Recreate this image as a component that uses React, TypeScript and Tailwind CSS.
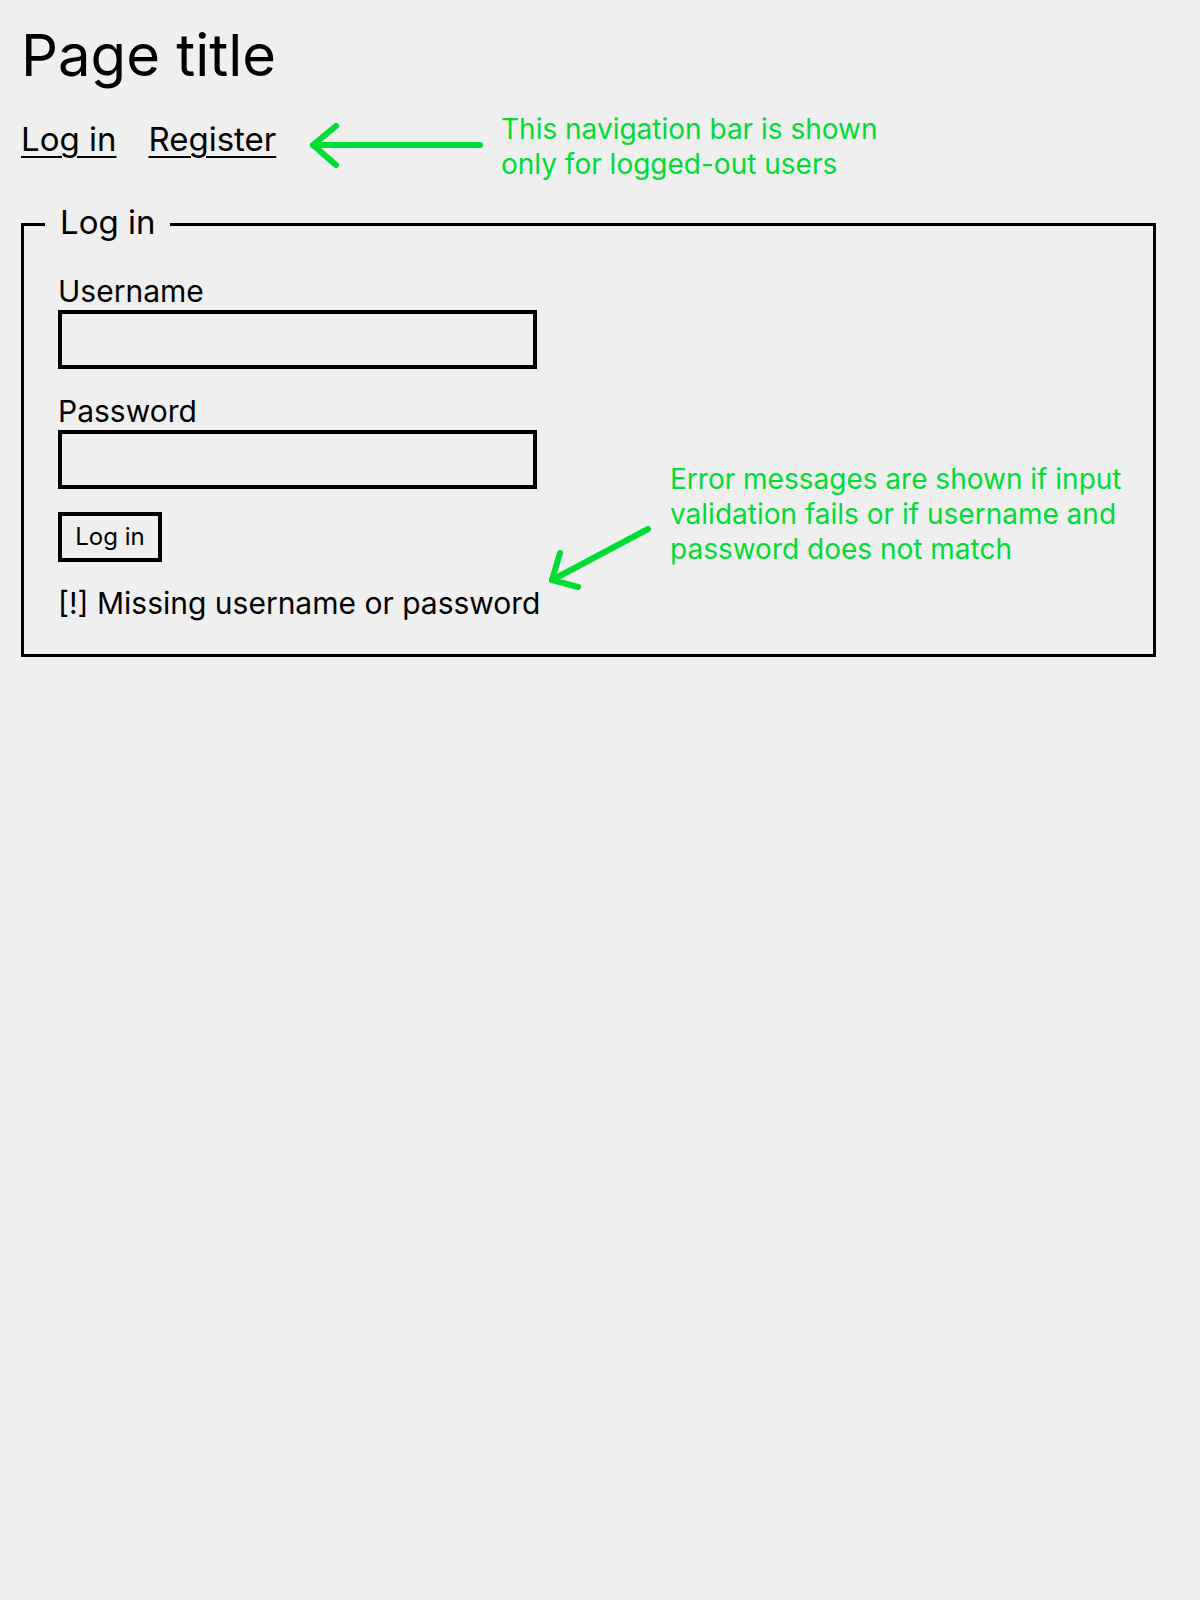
import React from "react";

const GREEN = "#00dc34";

function ArrowLeft() {
  return (
    <svg width="180" height="50" viewBox="0 0 180 50" className="shrink-0 mt-[8px]">
      <g stroke={GREEN} strokeWidth="6" strokeLinecap="round" strokeLinejoin="round" fill="none">
        <line x1="7" y1="25" x2="174" y2="25" />
        <polyline points="30,6 7,25 30,45" />
      </g>
    </svg>
  );
}

function ArrowDownLeft() {
  return (
    <svg width="112" height="74" viewBox="0 0 112 74" className="shrink-0 ml-[9px] mt-[247px]">
      <g stroke={GREEN} strokeWidth="6" strokeLinecap="round" strokeLinejoin="round" fill="none">
        <line x1="102" y1="9" x2="6" y2="60" />
        <polyline points="14,33 6,60 32,67" />
      </g>
    </svg>
  );
}

export default function App() {
  return (
    <div
      className="min-h-[1600px] w-full bg-[#efefef] pl-[21px] pt-[20px] text-black"
      style={{ fontFamily: "Inter, 'Noto Sans', sans-serif" }}
    >
      <h1 className="text-[58px] leading-[70px] font-normal">Page title</h1>

      <div className="mt-[22px] flex items-start">
        <nav className="mt-[7px] flex w-[285px] shrink-0 gap-[32px] text-[33px] leading-[40px]">
          <a href="#" className="underline decoration-[2px] underline-offset-[5px]">
            Log in
          </a>
          <a href="#" className="underline decoration-[2px] underline-offset-[5px]">
            Register
          </a>
        </nav>
        <ArrowLeft />
        <div className="ml-[15px] text-[28px] leading-[35px] text-[#00dc34]">
          <div className="whitespace-nowrap">This navigation bar is shown</div>
          <div className="whitespace-nowrap">only for logged-out users</div>
        </div>
      </div>

      <fieldset className="mt-[22px] w-[1135px] border-[3px] border-black pl-[34px] pt-[29px] pb-[33px]">
        <legend className="ml-[-13px] px-[15px] pb-[4px] text-[33px] leading-[36px]">Log in</legend>
        <div className="flex items-start">
          <div className="flex w-[479px] shrink-0 flex-col gap-[23px]">
            <div className="flex flex-col gap-[1px]">
              <label className="text-[30px] leading-[36px]">Username</label>
              <input className="h-[59px] w-[479px] border-4 border-black bg-transparent outline-none" />
            </div>
            <div className="mt-[1px] flex flex-col gap-[1px]">
              <label className="text-[30px] leading-[36px]">Password</label>
              <input type="password" className="h-[59px] w-[479px] border-4 border-black bg-transparent outline-none" />
            </div>
            <div>
              <button className="h-[50px] w-[104px] border-4 border-black bg-transparent text-[24px] leading-[30px]">
                Log in
              </button>
            </div>
            <p className="whitespace-nowrap text-[30px] leading-[36px]">[!] Missing username or password</p>
          </div>
          <ArrowDownLeft />
          <div className="ml-[12px] mt-[189px] text-[28px] leading-[35px] text-[#00dc34]">
            <div className="whitespace-nowrap">Error messages are shown if input</div>
            <div className="whitespace-nowrap">validation fails or if username and</div>
            <div className="whitespace-nowrap">password does not match</div>
          </div>
        </div>
      </fieldset>
    </div>
  );
}
